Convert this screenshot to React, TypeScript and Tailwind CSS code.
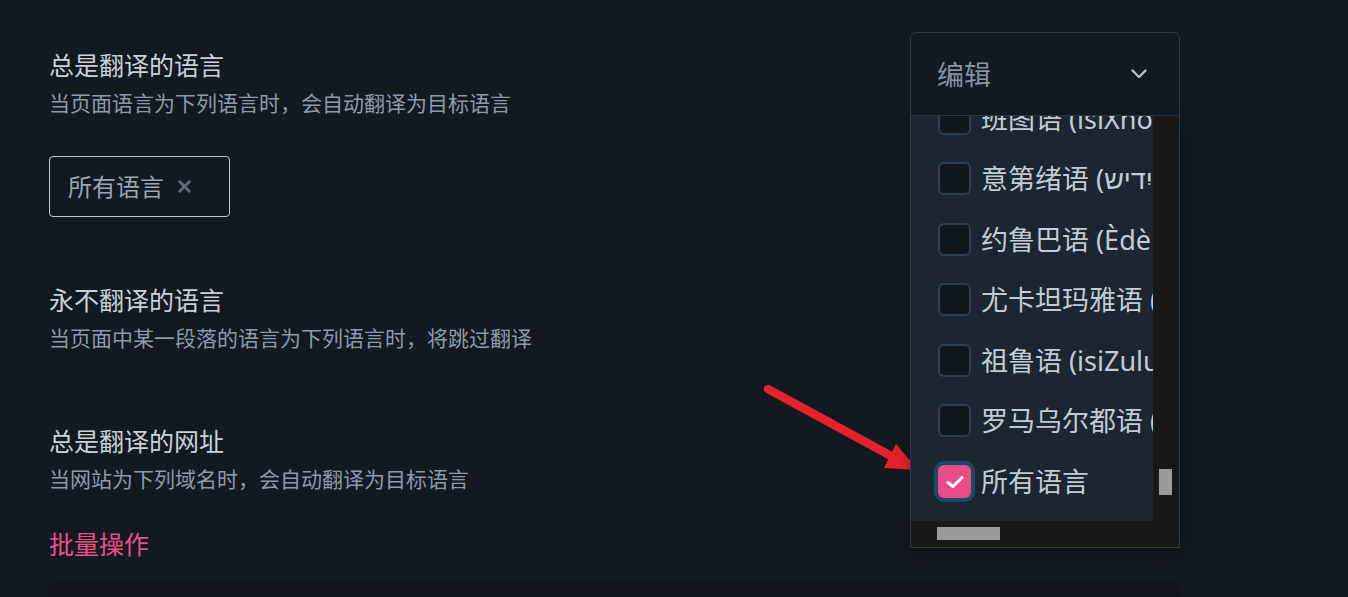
import { X } from 'lucide-react'

const languages = [
  { label: '班图语 (isiXhosa)', checked: false },
  { label: '意第绪语 (ייִדיש)', checked: false },
  { label: '约鲁巴语 (Èdè Yorùbá)', checked: false },
  { label: "尤卡坦玛雅语 (Maaya T'aan)", checked: false },
  { label: '祖鲁语 (isiZulu)', checked: false },
  { label: '罗马乌尔都语 (Roman Urdu)', checked: false },
  { label: '所有语言', checked: true },
]

function Checkbox({ checked }: { checked: boolean }) {
  if (checked) {
    return (
      <span className="flex h-[33px] w-[33px] shrink-0 items-center justify-center rounded-[6px] bg-[#e84d8a] ring-4 ring-[#1a4a63]">
        <svg width="18" height="14" viewBox="0 0 18 14" fill="none">
          <path d="M2 7.5 L7 11.5 L16 2.5" stroke="white" strokeWidth="3" strokeLinecap="round" strokeLinejoin="round" />
        </svg>
      </span>
    )
  }
  return <span className="h-[33px] w-[33px] shrink-0 rounded-[6px] border-2 border-[#2d3e4c] bg-[#10171d]" />
}

function LanguageSelect() {
  return (
    <div className="relative w-[270px] shrink-0">
      {/* trigger */}
      <div className="flex h-[84px] items-center justify-between rounded-t-[6px] border border-[#2b3b48] bg-[#121920] pl-[26px] pr-[32px]">
        <span className="text-[27px] leading-none text-[#8693a1]">编辑</span>
        <svg width="16" height="10" viewBox="0 0 16 10" fill="none">
          <path d="M1.5 1.5 L8 8 L14.5 1.5" stroke="#b4c0cb" strokeWidth="2.4" strokeLinecap="round" strokeLinejoin="round" />
        </svg>
      </div>

      {/* open list */}
      <div className="absolute left-0 top-full z-10 flex h-[432px] w-[270px] flex-col border-x border-b border-[#2b3b48] bg-[#181818] shadow-[0_6px_16px_rgba(0,0,0,0.25)]">
        <div className="flex h-[405px]">
          <div className="h-full w-[242px] overflow-hidden bg-[#1b2630]">
            <div className="-mt-[28.3px]">
              {languages.map((l) => (
                <div key={l.label} className="flex h-[60.6px] items-center gap-[10px] whitespace-nowrap pl-[27px]">
                  <Checkbox checked={l.checked} />
                  <span className="text-[27px] leading-none text-[#c3ccd4]">{l.label}</span>
                </div>
              ))}
            </div>
          </div>
          <div className="relative flex-1">
            <div className="absolute left-[6px] top-[353px] h-[26px] w-[13px] bg-[#9b9b9b]" />
          </div>
        </div>
        <div className="relative h-[26px]">
          <div className="absolute left-[26px] top-[6px] h-[13px] w-[63px] bg-[#9b9b9b]" />
        </div>
      </div>
    </div>
  )
}

export default function App() {
  return (
    <div className="relative h-[597px] overflow-hidden bg-[#131920] pl-[49px] pr-[168px] pt-[32px] font-['Noto_Sans','Noto_Sans_CJK_SC',sans-serif]">
      <div className="flex items-start justify-between">
        <div className="pt-[15px]">
          <h2 className="text-[25px] leading-[36px] text-[#c8d1d8]">总是翻译的语言</h2>
          <p className="mt-[5px] text-[21px] leading-[30px] text-[#8d9aa9]">当页面语言为下列语言时，会自动翻译为目标语言</p>
          <div className="mt-[38px] inline-flex h-[61px] items-center gap-[11px] rounded-[4px] border border-[#c3cbd2] pl-[18px] pr-[35px]">
            <span className="text-[24px] leading-none text-[#98a5b3]">所有语言</span>
            <X size={19} strokeWidth={3.6} className="text-[#5f6c79]" />
          </div>
        </div>
        <LanguageSelect />
      </div>

      <h2 className="mt-[65px] text-[25px] leading-[36px] text-[#c8d1d8]">永不翻译的语言</h2>
      <p className="mt-[5px] text-[21px] leading-[30px] text-[#8d9aa9]">当页面中某一段落的语言为下列语言时，将跳过翻译</p>

      <h2 className="mt-[70px] text-[25px] leading-[36px] text-[#c8d1d8]">总是翻译的网址</h2>
      <p className="mt-[5px] text-[21px] leading-[30px] text-[#8d9aa9]">当网站为下列域名时，会自动翻译为目标语言</p>

      <div className="mt-[32px] text-[25px] leading-[36px] text-[#e8508c]">批量操作</div>

      <div className="mt-[20px] h-[100px] rounded-[8px] bg-[#10161c]" />

      {/* annotation arrow */}
      <svg className="pointer-events-none absolute left-0 top-0" width="1348" height="597" viewBox="0 0 1348 597">
        <line x1="768" y1="389" x2="893" y2="457" stroke="#e5212b" strokeWidth="8.5" strokeLinecap="round" />
        <polygon points="918,470 896,444 884,468" fill="#e5212b" />
      </svg>
    </div>
  )
}
